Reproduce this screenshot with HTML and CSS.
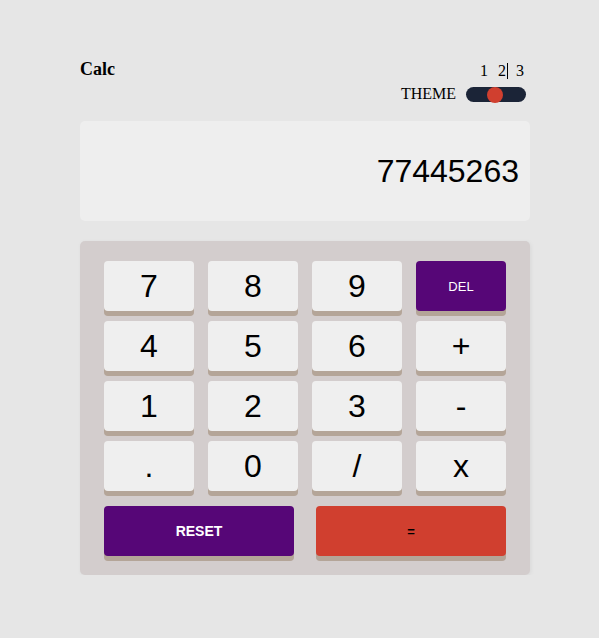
FILE: index.html
```html
<!DOCTYPE html>
<html lang="en">
<head>
<meta charset="utf-8">
<title>Calc</title>
<link rel="stylesheet" href="styles.css">
</head>
<body>
<div class="app">
  <header class="header">
    <h1 class="title">Calc</h1>
    <div class="theme">
      <div class="theme-nums"><span class="num">1</span><span class="num num-active">2</span><span class="num num-last">3</span></div>
      <div class="theme-row">
        <span class="theme-label">THEME</span>
        <div class="toggle"><span class="knob"></span></div>
      </div>
    </div>
  </header>
  <div class="display">77445263</div>
  <div class="keypad">
    <div class="keys">
      <button class="key">7</button>
      <button class="key">8</button>
      <button class="key">9</button>
      <button class="key key-del">DEL</button>
      <button class="key">4</button>
      <button class="key">5</button>
      <button class="key">6</button>
      <button class="key">+</button>
      <button class="key">1</button>
      <button class="key">2</button>
      <button class="key">3</button>
      <button class="key">-</button>
      <button class="key">.</button>
      <button class="key">0</button>
      <button class="key">/</button>
      <button class="key">x</button>
    </div>
    <div class="bottom-keys">
      <button class="key key-reset">RESET</button>
      <button class="key key-equal">=</button>
    </div>
  </div>
</div>
</body>
</html>
```
FILE: styles.css
```css
html, body {
  margin: 0;
  padding: 0;
  background: #e6e6e6;
}
body {
  font-family: "Liberation Serif", "Times New Roman", serif;
  color: #000;
}
.app {
  width: 450px;
  margin-left: 80px;
  padding-top: 59px;
}
.header {
  display: flex;
  justify-content: space-between;
  align-items: flex-start;
}
.title {
  margin: 0;
  font-size: 18px;
  font-weight: bold;
  line-height: 21px;
}
.theme {
  display: flex;
  flex-direction: column;
  align-items: flex-end;
  padding-top: 4px;
  padding-right: 4px;
}
.theme-nums {
  display: flex;
  font-size: 16px;
  line-height: 16px;
  padding-right: 2px;
}
.num {
  display: inline-block;
  width: 8px;
}
.num-active {
  width: 9px;
  margin-left: 10px;
  border-right: 1px solid #000;
}
.num-last {
  margin-left: 8px;
}
.theme-row {
  display: flex;
  align-items: center;
  gap: 10px;
  margin-top: 7px;
  height: 16px;
}
.theme-label {
  font-size: 16px;
  line-height: 16px;
}
.toggle {
  position: relative;
  width: 60px;
  height: 15px;
  border-radius: 8px;
  background: #1b2437;
}
.knob {
  position: absolute;
  left: 21px;
  top: 0;
  width: 16px;
  height: 16px;
  border-radius: 50%;
  background: #d03f2f;
}
.display {
  margin-top: 19px;
  height: 100px;
  box-sizing: border-box;
  background: #eeeeee;
  border-radius: 5px;
  display: flex;
  align-items: center;
  justify-content: flex-end;
  padding-right: 11px;
  font-family: "Liberation Sans", Arial, sans-serif;
  font-size: 32px;
}
.keypad {
  margin-top: 20px;
  background: #d3cdcd;
  border-radius: 5px;
  padding: 20px 24px 19px;
  box-shadow: 1px 1px 4px rgba(0, 0, 0, 0.06);
}
.keys {
  display: grid;
  grid-template-columns: repeat(4, 90px);
  grid-auto-rows: 50px;
  column-gap: 14px;
  row-gap: 10px;
}
.key {
  border: none;
  margin: 0;
  padding: 0;
  background: #efefef;
  border-radius: 4px;
  box-shadow: 0 5px 0 #b4a598;
  font-family: "Liberation Sans", Arial, sans-serif;
  font-size: 32px;
  color: #000;
  height: 50px;
}
.key-del {
  background: #560677;
  color: #fff;
  font-size: 13px;
}
.bottom-keys {
  margin-top: 15px;
  display: flex;
  gap: 22px;
}
.bottom-keys .key {
  flex: 1;
}
.key-reset {
  background: #560677;
  color: #fff;
  font-size: 14px;
  font-weight: bold;
}
.key-equal {
  background: #d03f2f;
  color: #000;
  font-size: 13px;
  font-weight: bold;
}
```
